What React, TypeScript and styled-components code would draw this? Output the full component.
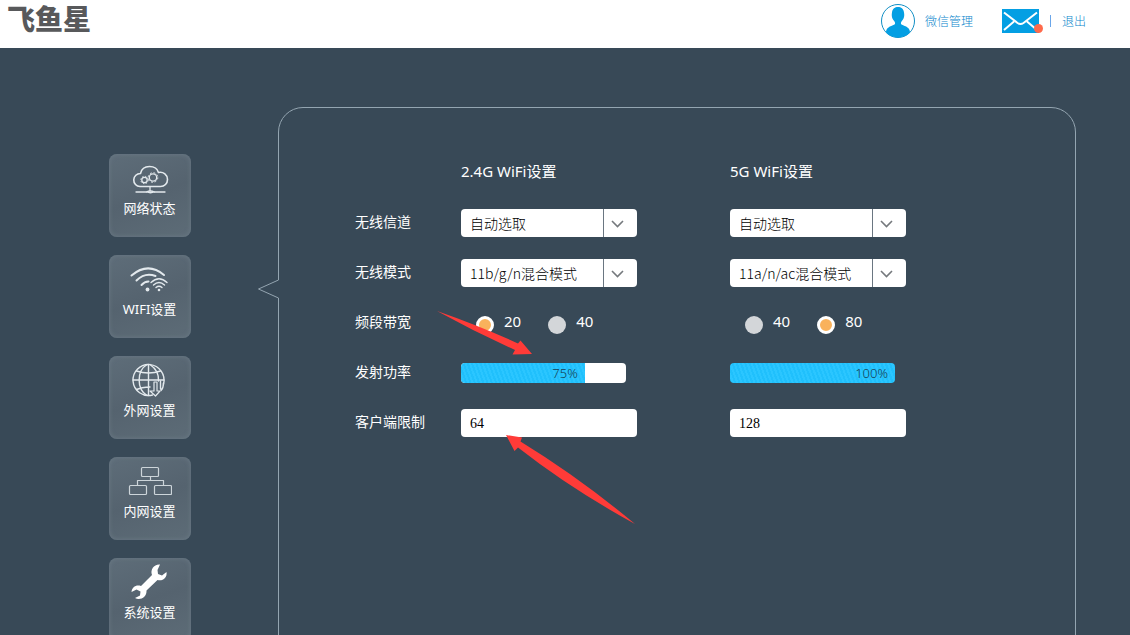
import React, { useState } from 'react';
import styled, { createGlobalStyle } from 'styled-components';

const UI_FONT = '"Noto Sans", "Noto Sans CJK SC", sans-serif';

const GlobalStyle = createGlobalStyle`
  * { box-sizing: border-box; }
  body {
    margin: 0;
    background: #384957;
    font-family: ${UI_FONT};
    font-size: 14px;
  }
`;

const Page = styled.div`
  display: flex;
  flex-direction: column;
  height: 100vh;
`;

const Header = styled.header`
  flex: none;
  display: flex;
  align-items: flex-start;
  justify-content: space-between;
  height: 48px;
  padding: 0 44px 0 7px;
  background: #fff;
`;

const Logo = styled.h1`
  margin: 0;
  font: 900 28px/36px "Noto Sans CJK SC", sans-serif;
  color: #58595b;
`;

const Account = styled.div`
  display: flex;
  align-items: center;
  height: 41px;
  font-size: 12px;
`;

const HeaderLink = styled.a`
  display: flex;
  align-items: center;
  gap: 10px;
  font-weight: 300;
  color: #0a86cc;
  text-decoration: none;
`;

const MailLink = styled.a`
  position: relative;
  display: flex;
  margin-left: 29px;
`;

const UnreadDot = styled.span`
  position: absolute;
  right: -4px;
  bottom: 0;
  width: 9px;
  height: 9px;
  border-radius: 50%;
  background: #ff6a4b;
`;

const Divider = styled.span`
  width: 1px;
  height: 12px;
  margin: 0 11px;
  background: #6aa6ea;
`;

const Main = styled.main`
  flex: 1;
  display: flex;
  align-items: flex-start;
  gap: 87px;
  min-height: 0;
  padding: 59px 54px 0 109px;
  overflow-y: auto;
  scrollbar-width: none;
`;

const Nav = styled.nav`
  flex: none;
  display: flex;
  flex-direction: column;
  gap: 18px;
  width: 82px;
  padding: 47px 0 40px;
`;

const NavItem = styled.a`
  display: flex;
  flex-direction: column;
  align-items: center;
  height: 83px;
  padding: 5px 1px 0 0;
  border-radius: 8px;
  background: linear-gradient(160deg, #5e6d79, #55636f 50%, #5d6c77);
  box-shadow: inset 0 0 5px #6b7a86;
  font-size: 13px;
  line-height: 18px;
  color: #fff;
  text-decoration: none;

  svg { display: block; }
`;

const Panel = styled.section`
  position: relative;
  flex: 1;
  min-width: 720px;
  min-height: 640px;
  padding: 40px 0 40px 76px;
  border: 1px solid #94a5b1;
  border-radius: 25px;
`;

const Pointer = styled.svg`
  position: absolute;
  left: -22px;
  top: 171px;
`;

const Annotation = styled.svg`
  position: absolute;
  left: 151px;
  top: 192px;
  pointer-events: none;
`;

const Row = styled.div`
  display: grid;
  grid-template-columns: 106px 269px 1fr;
  align-items: center;
  height: 50px;
  color: #fff;
`;

const RowLabel = styled.label`
  padding-bottom: 2px;
  line-height: 20px;
`;

const Heading = styled.h2`
  margin: 0;
  padding-bottom: 4px;
  font-size: 15px;
  font-weight: 400;
  line-height: 20px;
`;

const SelectBox = styled.div`
  position: relative;
  width: 176px;
  height: 28px;

  svg {
    position: absolute;
    right: 0;
    top: 0;
    pointer-events: none;
  }
`;

const Select = styled.select`
  appearance: none;
  width: 100%;
  height: 100%;
  padding: 0 36px 1px 9px;
  border: 0;
  border-radius: 4px;
  background: #fff;
  color: #000;
  font: 300 14px "Noto Sans CJK SC", sans-serif;
`;

const TextInput = styled.input`
  width: 176px;
  height: 28px;
  padding: 2px 9px 0;
  border: 0;
  border-radius: 4px;
  background: #fff;
  color: #000;
  font: 14px "Liberation Serif", "Noto Sans CJK SC", serif;
`;

const RadioGroup = styled.div`
  display: flex;
  gap: 27px;
  padding: 0 0 2px 15px;
`;

const RadioLabel = styled.label`
  display: flex;
  gap: 10px;
  height: 24px;
  font-size: 15px;
  line-height: 22px;
`;

const Radio = styled.input`
  appearance: none;
  align-self: flex-end;
  width: 18px;
  height: 18px;
  margin: 0;
  border-radius: 50%;
  background: #d3d6d9;

  &:checked {
    border: 3px solid #fff;
    background: #f9b25c;
  }
`;

const Meter = styled.div`
  width: 165px;
  height: 20px;
  border-radius: 4px;
  background: #fff;
  overflow: hidden;
`;

const MeterFill = styled.div`
  height: 100%;
  padding-right: 7px;
  background: repeating-linear-gradient(70deg, #20c0fc 0 2px, #2bc6ff 2px 4px);
  font-size: 13px;
  font-weight: 300;
  line-height: 21px;
  text-align: right;
  color: #173f54;
`;

const line = { fill: 'none', stroke: '#e3e9ed', strokeLinecap: 'round', strokeLinejoin: 'round' } as const;

const CloudIcon = () => (
  <svg width="44" height="40" viewBox="0 0 44 40" {...line} strokeWidth="1.600">
    <path d="M12 27.500A6.500 6.500 0 0 1 12.500 14.500C13.500 10 17 7.500 21.500 7.500S29.500 10 30.500 13.500C35.500 12.500 39.500 16 39.500 20.500C39.500 24.500 36.500 27.500 32.500 27.500Z" />
    <g strokeWidth="1.300">
      <circle cx="16.500" cy="21" r="2.700" />
      <circle cx="16.500" cy="21" r="3.700" strokeWidth="1" strokeDasharray="1.450 1.450" strokeLinecap="butt" />
      <circle cx="25" cy="18.500" r="3.700" />
      <circle cx="25" cy="18.500" r="4.800" strokeWidth="1" strokeDasharray="1.880 1.880" strokeLinecap="butt" />
      <path d="M22 28v4M8 33h10.500M26.500 33H37" />
      <path d="M18.500 33q3.500-2 8 0q-4 1.500-8 0z" />
    </g>
  </svg>
);

const WifiIcon = () => (
  <svg width="44" height="40" viewBox="0 0 44 40" {...line} strokeWidth="2">
    <path d="M3.500 15.500Q20 1.500 36 15" />
    <path d="M8.500 20.500Q17 12 27.500 16" />
    <path d="M13.500 25Q16.500 21.500 20.500 21.500" />
    <circle cx="19.500" cy="29.500" r="1.900" fill="#e3e9ed" stroke="none" />
    <g strokeWidth="1.400">
      <path d="M23 22.500Q31 15 39 22.500" />
      <path d="M25.500 25Q31 20 36.500 25" />
      <path d="M28 27.500Q31 25 34 27.500" />
    </g>
    <circle cx="31" cy="30" r="1.300" fill="#e3e9ed" stroke="none" />
  </svg>
);

const GlobeIcon = () => (
  <svg width="44" height="40" viewBox="0 0 44 40" {...line} strokeWidth="1.400">
    <path d="M24.500 34A15.500 15.500 0 1 1 35.500 23" />
    <path d="M20.500 3.500V34.500M5 19H36M8.500 10Q20.500 14 32.500 10M8.500 28.500Q15 25.500 22 26" />
    <path d="M19 3.500C8.500 10 8.500 28 19 34.500M22 3.500C28.500 8 31 13 30.500 20" />
    <path d="M26 21h3v9h3l-4.500 5-5.500-5h4z" strokeWidth="1.200" />
    <path d="M32.500 20v8M35.500 22q0 5-2.500 7.500" />
  </svg>
);

const LanIcon = () => (
  <svg width="44" height="40" viewBox="0 0 44 40" {...line} stroke="#cdd5da" strokeWidth="1.200">
    <rect x="13.500" y="5.500" width="17" height="9" rx="1" />
    <rect x="1.500" y="23.500" width="17" height="9" rx="1" />
    <rect x="26.500" y="23.500" width="17" height="9" rx="1" />
    <path d="M22.500 14.500v4M9.500 23.500v-5h26v5" />
  </svg>
);

const WrenchIcon = () => (
  <svg width="44" height="40" viewBox="0 0 44 40" fill="#fff">
    <path d="M32 1.500c-6-.5-10 5-8 10.500L13 23c-5-1.500-9 1-9.500 6l5-2.500 4 2-.5 4-5 2.500c5 3 12-1 11.500-7.500l11-10.500c5 1.500 10-2 9-8l-4.500 3.500-4-1.500-.5-4z" />
  </svg>
);

const AvatarIcon = () => (
  <svg width="34" height="34" viewBox="0 0 34 34">
    <circle cx="17" cy="17" r="16.500" fill="#fff" stroke="#128fc5" />
    <path d="M5 28.500c0-5 4-6 8.500-8 1-1 .5-2 0-3-3-3-3-6-2.500-9C11.500 4.500 14 3 17 3s5.500 1.500 6 5.500c.5 3 .5 6-2.500 9-.5 1-1 2 0 3 4.500 2 8.500 3 8.500 8-6.500 6.500-17.500 6.500-24 0z" fill="#049fe3" />
  </svg>
);

const MailIcon = () => (
  <svg width="37" height="24" viewBox="0 0 37 24">
    <path fill="#049fe3" d="M0 0h37v24H0z" />
    <path d="M2 3.500L15.500 14q3 2 6 0L35 3.500M2 21l10-8.500M35 21l-10-8.500" fill="none" stroke="#fff" strokeWidth="2" />
  </svg>
);

const NAV_ITEMS = [
  { label: '网络状态', Icon: CloudIcon },
  { label: 'WIFI设置', Icon: WifiIcon },
  { label: '外网设置', Icon: GlobeIcon },
  { label: '内网设置', Icon: LanIcon },
  { label: '系统设置', Icon: WrenchIcon },
];

const DropDown = ({ id, label, options }: { id?: string; label?: string; options: string[] }) => (
  <SelectBox>
    <Select id={id} aria-label={label}>
      {options.map((o) => <option key={o}>{o}</option>)}
    </Select>
    <svg width="34" height="28" viewBox="0 0 34 28" fill="none">
      <path d="M.5 0v28" stroke="#6a7681" />
      <path d="M9 12l5.500 5.500L20 12" stroke="#75797d" strokeWidth="1.600" />
    </svg>
  </SelectBox>
);

const Bandwidth = ({ name, options, initial }: { name: string; options: string[]; initial: string }) => {
  const [value, setValue] = useState(initial);
  return (
    <RadioGroup role="radiogroup" aria-label={`${name} 频段带宽`}>
      {options.map((o) => (
        <RadioLabel key={o}>
          <Radio type="radio" name={name} checked={value === o} onChange={() => setValue(o)} />
          {o}
        </RadioLabel>
      ))}
    </RadioGroup>
  );
};

const Power = ({ percent, label }: { percent: number; label: string }) => (
  <Meter role="progressbar" aria-label={label} aria-valuenow={percent} aria-valuemin={0} aria-valuemax={100}>
    <MeterFill style={{ width: `${percent}%` }}>{percent}%</MeterFill>
  </Meter>
);

export default function App() {
  return (
    <>
      <GlobalStyle />
      <Page>
        <Header>
          <Logo>飞鱼星</Logo>
          <Account>
            <HeaderLink href="#wechat"><AvatarIcon />微信管理</HeaderLink>
            <MailLink href="#mail" aria-label="消息"><MailIcon /><UnreadDot /></MailLink>
            <Divider />
            <HeaderLink href="#logout">退出</HeaderLink>
          </Account>
        </Header>
        <Main>
          <Nav>
            {NAV_ITEMS.map(({ label, Icon }) => (
              <NavItem key={label} href="#"><Icon />{label}</NavItem>
            ))}
          </Nav>
          <Panel>
            <Pointer width="22" height="20" viewBox="0 0 22 20">
              <path d="M21 1h1v18h-1z" fill="#384957" />
              <path d="M21.500 1L1.500 10l20 9" fill="none" stroke="#94a5b1" />
            </Pointer>
            <form>
              <Row>
                <span />
                <Heading>2.4G WiFi设置</Heading>
                <Heading>5G WiFi设置</Heading>
              </Row>
              <Row>
                <RowLabel htmlFor="channel24">无线信道</RowLabel>
                <DropDown id="channel24" options={['自动选取', '1', '6', '11']} />
                <DropDown label="5G 无线信道" options={['自动选取', '36', '149']} />
              </Row>
              <Row>
                <RowLabel htmlFor="mode24">无线模式</RowLabel>
                <DropDown id="mode24" options={['11b/g/n混合模式']} />
                <DropDown label="5G 无线模式" options={['11a/n/ac混合模式']} />
              </Row>
              <Row>
                <RowLabel as="span">频段带宽</RowLabel>
                <Bandwidth name="2.4G" options={['20', '40']} initial="20" />
                <Bandwidth name="5G" options={['40', '80']} initial="80" />
              </Row>
              <Row>
                <RowLabel as="span">发射功率</RowLabel>
                <Power label="2.4G 发射功率" percent={75} />
                <Power label="5G 发射功率" percent={100} />
              </Row>
              <Row>
                <RowLabel htmlFor="limit24">客户端限制</RowLabel>
                <TextInput id="limit24" defaultValue="64" />
                <TextInput aria-label="5G 客户端限制" defaultValue="128" />
              </Row>
            </form>
            <Annotation width="220" height="236" viewBox="430 300 220 236" fill="#ff3b38">
              <path d="M437 311Q480 326 518 343.500L520.500 340.500L532 354L512.500 354.500L515 350Q475 332 437 311Z" />
              <path d="M506 435L522 437.500L520.500 441.500Q580 478 635 524Q571 489 518 447.500L514.500 451Z" />
            </Annotation>
          </Panel>
        </Main>
      </Page>
    </>
  );
}
